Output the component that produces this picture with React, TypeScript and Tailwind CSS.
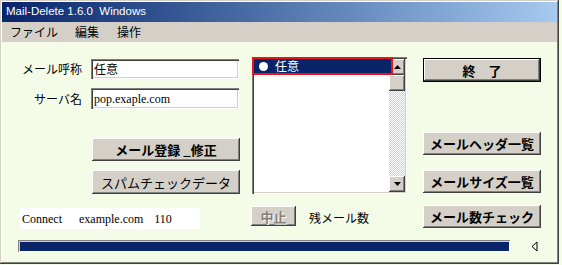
import React from 'react';

const jp = 'font-["Noto_Sans_CJK_JP",sans-serif]';
const raised =
  'bg-[#d4d0c8] shadow-[inset_-1px_-1px_0_#404040,inset_1px_1px_0_#ffffff,inset_-2px_-2px_0_#808080,inset_2px_2px_0_#d4d0c8]';
const sunken =
  'bg-white shadow-[inset_1px_1px_0_#808080,inset_2px_2px_0_#404040,inset_-1px_-1px_0_#ffffff,inset_-2px_-2px_0_#d4d0c8]';

// Win classic 3D button
function Btn({ label, bold = true, className = '' }: { label: string; bold?: boolean; className?: string }) {
  return (
    <button
      className={`${raised} ${jp} flex items-center justify-center text-[13px] leading-none text-black ${bold ? 'font-bold' : 'font-normal'} ${className}`}
    >
      {label}
    </button>
  );
}

function ScrollArrow({ up }: { up: boolean }) {
  return (
    <div className={`${raised} w-[16px] h-[16px] flex items-center justify-center`}>
      <svg width="7" height="4" viewBox="0 0 7 4">
        {up ? <polygon points="3.5,0 7,4 0,4" fill="#000" /> : <polygon points="0,0 7,0 3.5,4" fill="#000" />}
      </svg>
    </div>
  );
}

function ListBox() {
  return (
    <div className={`${sunken} relative w-[155px] h-[137px] ml-[12px] flex justify-end p-[2px]`}>
      {/* selected item */}
      <div className="absolute left-0 top-0 w-[141px] h-[18px] border-2 border-[#e8131b] bg-[#0a246a] flex items-center pl-[5px] gap-[7px]">
        <span className="w-[9px] h-[9px] rounded-full bg-white" />
        <span className={`${jp} text-[12px] text-white leading-none`}>任意</span>
      </div>
      {/* scrollbar */}
      <div className="w-[16px] h-full flex flex-col">
        <ScrollArrow up />
        <div className={`${raised} w-[16px] h-[16px]`} />
        <div className="flex-1 bg-[repeating-conic-gradient(#d4d0c8_0%_25%,#ffffff_0%_50%)] bg-[length:2px_2px]" />
        <ScrollArrow up={false} />
      </div>
    </div>
  );
}

function Field({ label, value, mono = false, h }: { label: string; value: string; mono?: boolean; h: string }) {
  return (
    <div className="flex items-center">
      <div className={`${jp} w-[80px] text-right text-[12px] text-black`}>{label}</div>
      <div
        className={`${sunken} ml-[9px] w-[148px] ${h} flex items-center pl-[3px] text-[12px] text-black ${mono ? 'font-["Liberation_Serif",serif]' : jp}`}
      >
        {value}
      </div>
    </div>
  );
}

export default function App() {
  return (
    <div className="w-[562px] h-[265px] bg-[#f4fce8] overflow-hidden">
      <div className="w-[559px] h-[264px] bg-[#d4d0c8] shadow-[inset_-1px_-1px_0_#404040,inset_1px_1px_0_#d4d0c8,inset_-2px_-2px_0_#808080,inset_2px_2px_0_#ffffff] p-[2px] flex flex-col">
        {/* title bar */}
        <div className="h-[20px] bg-gradient-to-r from-[#0a246a] to-[#a6caf0] flex items-center pl-[4px]">
          <span className='font-["Liberation_Sans",sans-serif] text-[11.5px] text-white whitespace-pre'>Mail-Delete 1.6.0  Windows</span>
        </div>
        {/* menu bar */}
        <div className={`${jp} h-[20px] flex items-center text-[12px] text-black pl-[8px]`}>
          <span>ファイル</span>
          <span className="ml-[17px]">編集</span>
          <span className="ml-[18px]">操作</span>
        </div>
        {/* client area */}
        <div className="flex-1 bg-[#f4fce8] flex flex-col pt-[15px]">
          <div className="flex items-start">
            <div className="flex flex-col">
              <div className="flex">
                <div className="flex flex-col w-[238px]">
                  <div className="mt-[2px]">
                    <Field label="メール呼称" value="任意" h="h-[20px]" />
                  </div>
                  <div className="mt-[9px]">
                    <Field label="サーバ名" value="pop.exaple.com" mono h="h-[21px]" />
                  </div>
                  <Btn label="メール登録 _修正" className="ml-[90px] mt-[29px] w-[148px] h-[23px]" />
                  <Btn label="スパムチェックデータ" bold={false} className="ml-[90px] mt-[9px] w-[148px] h-[24px]" />
                </div>
                <ListBox />
              </div>
              {/* status row */}
              <div className="flex items-start mt-[12px]">
                <div className='ml-[18px] mt-[2px] w-[180px] h-[21px] bg-white flex items-center pl-[2px] font-["Liberation_Serif",serif] text-[12px] text-black'>
                  <span>Connect</span>
                  <span className="ml-[17px]">example.com</span>
                  <span className="ml-[11px]">110</span>
                </div>
                <button
                  className={`${raised} ${jp} ml-[51px] w-[45px] h-[20px] flex items-center justify-center text-[13px] font-bold leading-none text-[#808080] [text-shadow:1px_1px_0_#ffffff]`}
                >
                  中止
                </button>
                <span className={`${jp} ml-[13px] mt-[3px] text-[12px] text-black`}>残メール数</span>
              </div>
            </div>
            {/* right column */}
            <div className="ml-[16px] flex flex-col w-[118px] mt-[1px]">
              <div className="border border-black">
                <Btn label="終　了" className="w-full h-[22px]" />
              </div>
              <Btn label="メールヘッダ一覧" className="mt-[50px] w-full h-[23px]" />
              <Btn label="メールサイズ一覧" className="mt-[15px] w-full h-[23px]" />
              <Btn label="メール数チェック" className="mt-[12px] w-full h-[23px]" />
            </div>
          </div>
          {/* progress row */}
          <div className="flex items-center mt-[11px]">
            <div className="ml-[16px] w-[492px] h-[12px] bg-[#0a246a] shadow-[inset_1px_1px_0_#808080,inset_-1px_-1px_0_#ffffff,inset_2px_2px_0_#d4d0c8]" />
            <svg className="ml-[21px]" width="7" height="11" viewBox="0 0 7 11">
              <polygon points="6,1 6,10 1,5.5" fill="none" stroke="#000" strokeWidth="1" />
            </svg>
          </div>
        </div>
      </div>
    </div>
  );
}
